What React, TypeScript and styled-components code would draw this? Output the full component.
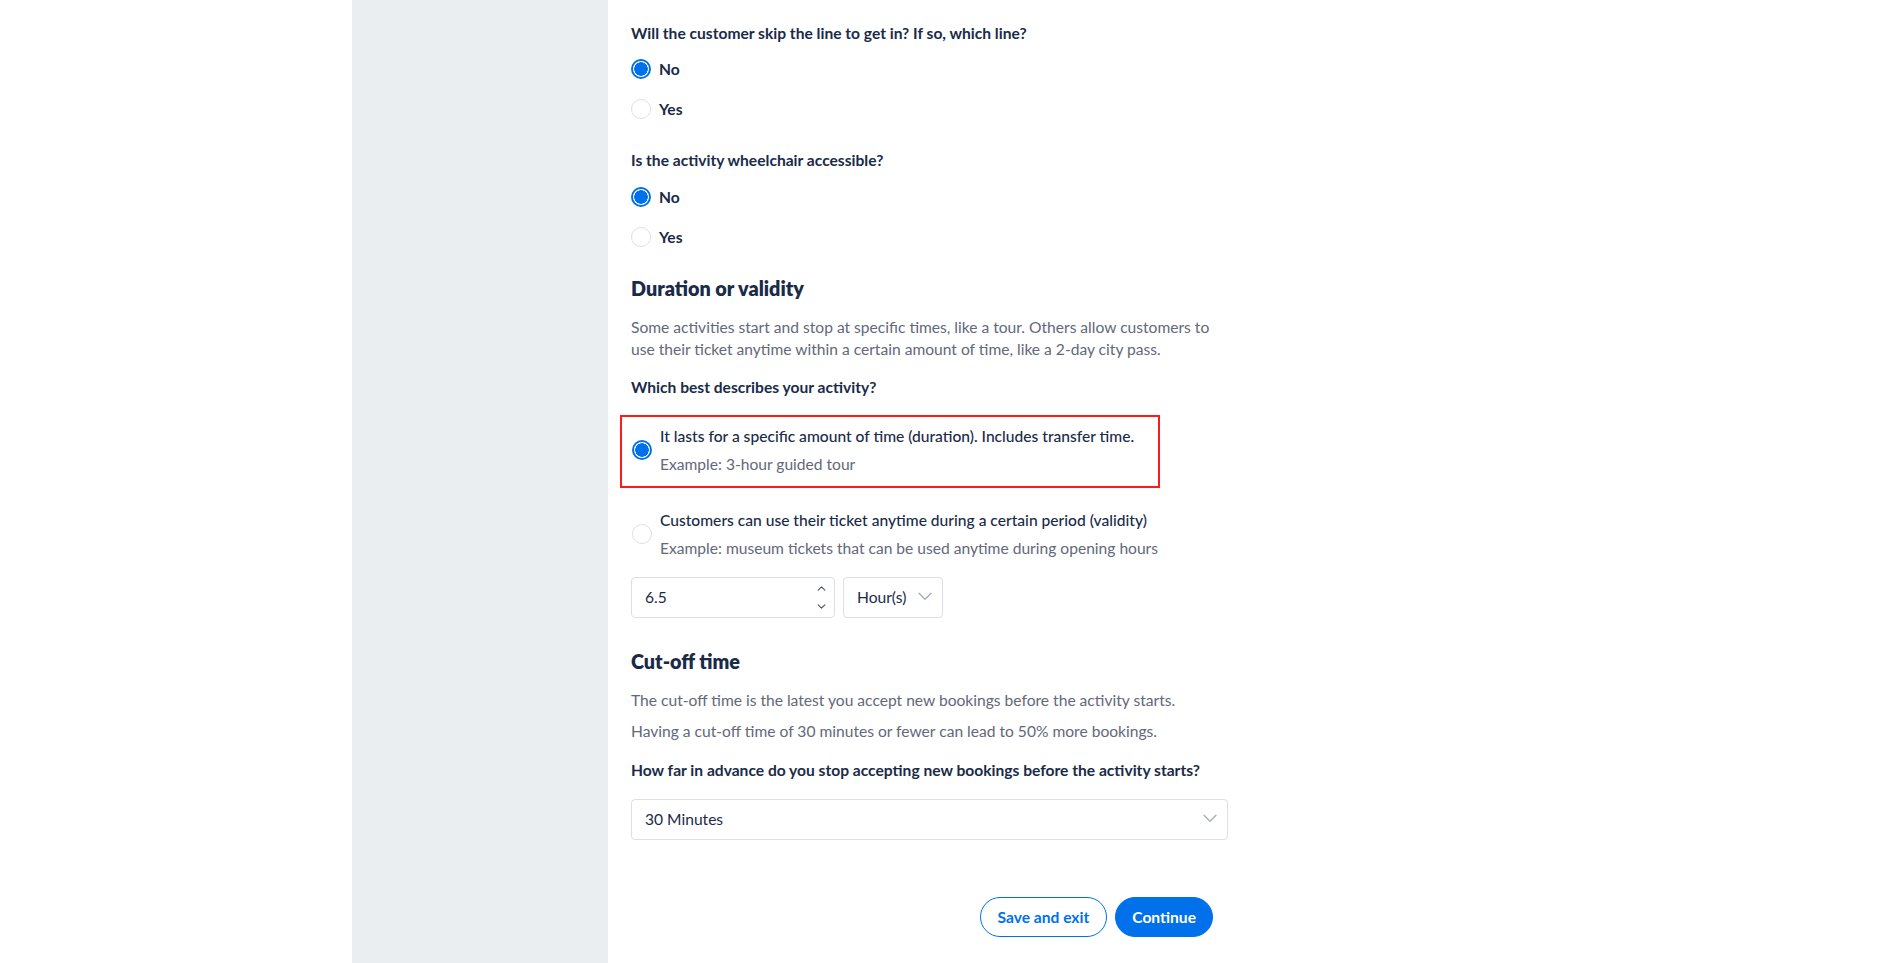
import React from "react";
import styled, { createGlobalStyle } from "styled-components";

const Global = createGlobalStyle`
  html, body { margin: 0; padding: 0; background: #ffffff; }
  body { font-family: Lato, "Open Sans", Arial, sans-serif; color: #1a2b49; -webkit-font-smoothing: antialiased; }
  * { box-sizing: border-box; }
`;

const Page = styled.div`
  display: flex;
  min-height: 963px;
  padding-left: 352px;
`;

const Sidebar = styled.aside`
  width: 256px;
  flex: 0 0 256px;
  background: #ebeef1;
`;

const Main = styled.main`
  width: 620px;
  padding: 23px 0 0 23px;
  display: flex;
  flex-direction: column;
`;

const Question = styled.div<{ $mt?: number }>`
  font-size: 15.6px;
  line-height: 20px;
  font-weight: 700;
  color: #1a2b49;
  margin-top: ${(p) => p.$mt ?? 0}px;
`;

const RadioGroup = styled.div<{ $mt?: number }>`
  display: flex;
  flex-direction: column;
  gap: 16px;
  margin-top: ${(p) => p.$mt ?? 0}px;
`;

const RadioRow = styled.label`
  display: flex;
  align-items: center;
  gap: 8px;
  height: 24px;
  font-size: 15.6px;
  font-weight: 700;
  color: #1a2b49;
`;

const RadioDot = styled.span<{ $checked?: boolean }>`
  width: 20px;
  height: 20px;
  flex: 0 0 20px;
  border-radius: 50%;
  border: ${(p) => (p.$checked ? "2px solid #0071eb" : "1px solid #dcdfe4")};
  background: ${(p) => (p.$checked ? "radial-gradient(circle, #0071eb 0 6.5px, #fff 7px)" : "#fff")};
`;

const Heading = styled.h2<{ $mt?: number }>`
  margin: ${(p) => p.$mt ?? 0}px 0 0;
  font-size: 19.8px;
  line-height: 26px;
  font-weight: 800;
  color: #1a2b49;
`;

const Para = styled.p<{ $mt?: number }>`
  margin: ${(p) => p.$mt ?? 0}px 0 0;
  font-size: 15.6px;
  line-height: 22px;
  color: #63687a;
  max-width: 592px;
`;

const OptionList = styled.div`
  display: flex;
  flex-direction: column;
  gap: 11px;
  margin-top: 18px;
`;

const Option = styled.div<{ $highlight?: boolean }>`
  display: flex;
  align-items: center;
  gap: 8px;
  width: 540px;
  margin-left: -11px;
  padding: 8px 10px 11px 10px;
  border: 2px solid ${(p) => (p.$highlight ? "#ff1a1a" : "transparent")};
`;

const OptionText = styled.div`
  display: flex;
  flex-direction: column;
  gap: 6px;
`;

const OptionTitle = styled.span`
  font-size: 15.6px;
  line-height: 22px;
  font-weight: 500;
  color: #1a2b49;
  white-space: nowrap;
`;

const OptionExample = styled.span`
  font-size: 15.6px;
  line-height: 22px;
  color: #63687a;
  white-space: nowrap;
`;

const FieldRow = styled.div<{ $mt?: number }>`
  display: flex;
  gap: 8px;
  margin-top: ${(p) => p.$mt ?? 5}px;
`;

const Box = styled.div<{ $w: number }>`
  width: ${(p) => p.$w}px;
  height: 41px;
  border: 1px solid #dcdfe4;
  border-radius: 4px;
  background: #fff;
  display: flex;
  align-items: center;
  justify-content: space-between;
  padding: 0 10px 2px 13px;
  font-size: 15.6px;
  color: #1a2b49;
`;

const Stepper = styled.div`
  display: flex;
  flex-direction: column;
  gap: 13px;
  margin: 2px -2px 0 0;
`;

const Chev = styled.svg`
  display: block;
`;

const ButtonRow = styled.div`
  display: flex;
  justify-content: flex-end;
  gap: 8px;
  margin-top: 57px;
  padding-right: 15px;
`;

const Button = styled.button<{ $primary?: boolean }>`
  height: 40px;
  padding: 0 ${(p) => (p.$primary ? 16 : 17)}px;
  border-radius: 20px;
  font-family: inherit;
  font-size: 15.6px;
  font-weight: 700;
  border: 1px solid #0071eb;
  background: ${(p) => (p.$primary ? "#0071eb" : "#fff")};
  color: ${(p) => (p.$primary ? "#fff" : "#0071eb")};
`;

const ChevronDown = ({ color = "#a6acbc", size = 14 }: { color?: string; size?: number }) => (
  <Chev width={size} height={size * 0.6} viewBox="0 0 14 8" fill="none">
    <path d="M1 1l6 6 6-6" stroke={color} strokeWidth="1.3" strokeLinecap="round" strokeLinejoin="round" />
  </Chev>
);

const ChevronUp = () => (
  <Chev width={9} height={5} viewBox="0 0 10 6" fill="none">
    <path d="M1 5l4-4 4 4" stroke="#4b5264" strokeWidth="1.3" strokeLinecap="round" strokeLinejoin="round" />
  </Chev>
);

const ChevronSmallDown = () => (
  <Chev width={9} height={5} viewBox="0 0 10 6" fill="none">
    <path d="M1 1l4 4 4-4" stroke="#4b5264" strokeWidth="1.3" strokeLinecap="round" strokeLinejoin="round" />
  </Chev>
);

const Radio = ({ label, checked }: { label: string; checked?: boolean }) => (
  <RadioRow>
    <RadioDot $checked={checked} />
    {label}
  </RadioRow>
);

export default function App() {
  return (
    <>
      <Global />
      <Page>
        <Sidebar />
        <Main>
          <Question>Will the customer skip the line to get in? If so, which line?</Question>
          <RadioGroup $mt={14}>
            <Radio label="No" checked />
            <Radio label="Yes" />
          </RadioGroup>

          <Question $mt={29}>Is the activity wheelchair accessible?</Question>
          <RadioGroup $mt={15}>
            <Radio label="No" checked />
            <Radio label="Yes" />
          </RadioGroup>

          <Heading $mt={26}>Duration or validity</Heading>
          <Para $mt={15}>
            Some activities start and stop at specific times, like a tour. Others allow customers to use their ticket
            anytime within a certain amount of time, like a 2-day city pass.
          </Para>
          <Question $mt={17}>Which best describes your activity?</Question>

          <OptionList>
            <Option $highlight>
              <RadioDot $checked />
              <OptionText>
                <OptionTitle>It lasts for a specific amount of time (duration). Includes transfer time.</OptionTitle>
                <OptionExample>Example: 3-hour guided tour</OptionExample>
              </OptionText>
            </Option>
            <Option>
              <RadioDot />
              <OptionText>
                <OptionTitle>Customers can use their ticket anytime during a certain period (validity)</OptionTitle>
                <OptionExample>Example: museum tickets that can be used anytime during opening hours</OptionExample>
              </OptionText>
            </Option>
          </OptionList>

          <FieldRow>
            <Box $w={204}>
              <span>6.5</span>
              <Stepper>
                <ChevronUp />
                <ChevronSmallDown />
              </Stepper>
            </Box>
            <Box $w={100}>
              <span>Hour(s)</span>
              <ChevronDown />
            </Box>
          </FieldRow>

          <Heading $mt={30}>Cut-off time</Heading>
          <Para $mt={15}>The cut-off time is the latest you accept new bookings before the activity starts.</Para>
          <Para $mt={9}>Having a cut-off time of 30 minutes or fewer can lead to 50% more bookings.</Para>
          <Question $mt={18}>How far in advance do you stop accepting new bookings before the activity starts?</Question>

          <FieldRow $mt={19}>
            <Box $w={597}>
              <span>30 Minutes</span>
              <ChevronDown />
            </Box>
          </FieldRow>

          <ButtonRow>
            <Button>Save and exit</Button>
            <Button $primary>Continue</Button>
          </ButtonRow>
        </Main>
      </Page>
    </>
  );
}
